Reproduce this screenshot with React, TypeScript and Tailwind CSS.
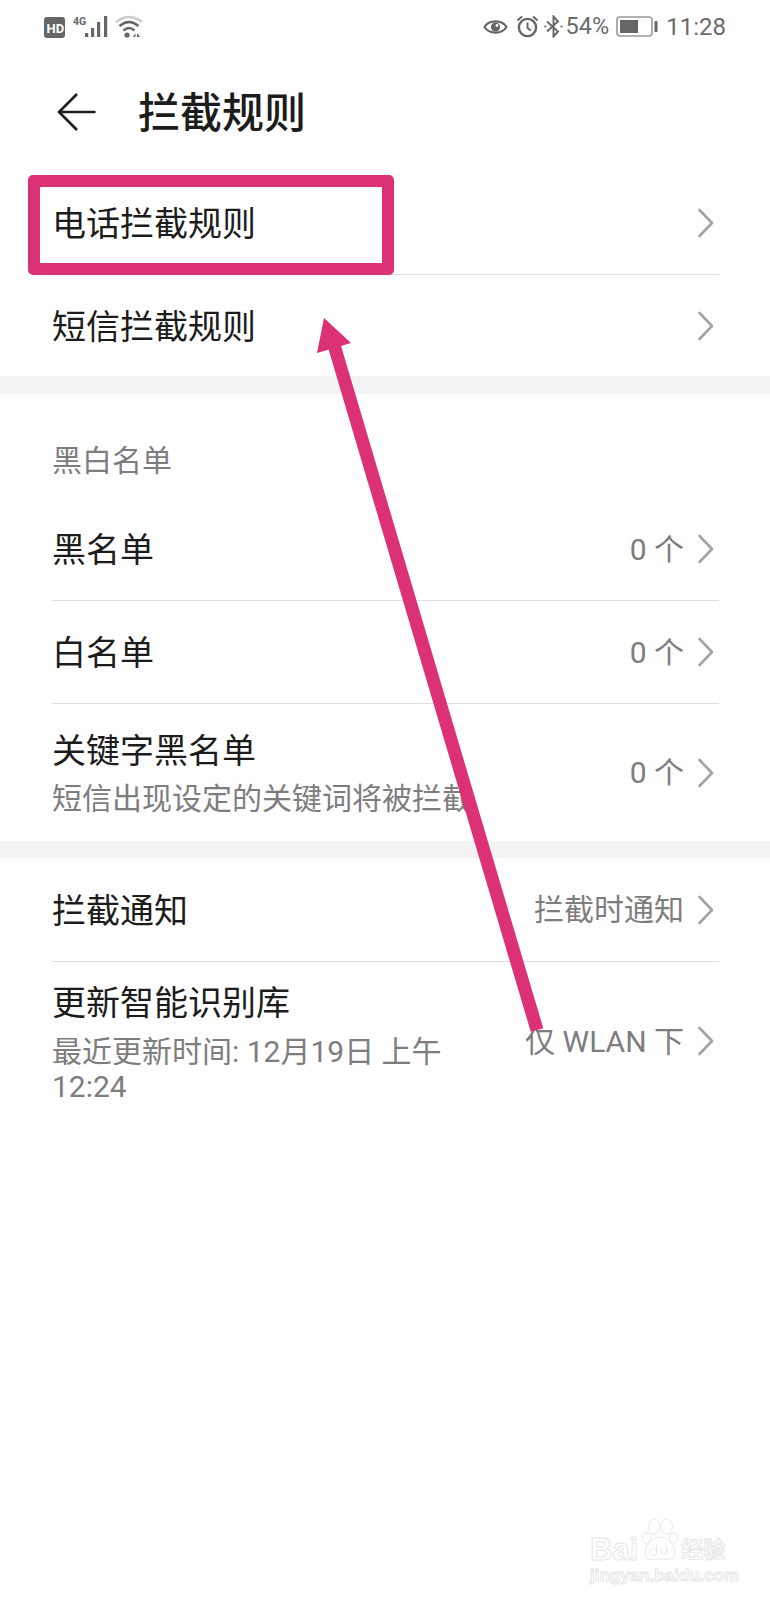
import * as React from "react";

const cjk = "font-['Roboto','Noto_Sans_CJK_SC',sans-serif]";

function Chevron() {
  return (
    <svg width="18" height="30" viewBox="0 0 18 30" fill="none" className="shrink-0">
      <path d="M2.5 2 L15 15 L2.5 28" stroke="#a3a3a3" strokeWidth="2.6" strokeLinecap="round" strokeLinejoin="round" />
    </svg>
  );
}

function Row({
  title,
  sub,
  value,
  height,
  divider,
}: {
  title: string;
  sub?: React.ReactNode;
  value?: string;
  height: string;
  divider?: boolean;
}) {
  return (
    <div className={`ml-[52px] mr-[51px] flex items-center justify-between ${height} ${divider ? "border-b border-[#dedede]" : ""}`}>
      <div className="min-w-0 pt-[2px]">
        <div className="text-[34px] leading-[44px] text-[#1c1c1c]">{title}</div>
        {sub}
      </div>
      <div className="flex shrink-0 items-center">
        {value && <span className="mr-[13px] whitespace-pre pt-[1px] text-[30px] leading-[40px] text-[#7d7d7d]">{value}</span>}
        <span className="mr-[4px]">
          <Chevron />
        </span>
      </div>
    </div>
  );
}

function StatusBar() {
  return (
    <div className="flex h-[52px] items-center justify-between pl-[44px] pr-[44px] pt-[1px] text-[#6b6b6b]">
      <svg width="99" height="28" viewBox="0 0 99 28">
        <rect x="0" y="4" width="21" height="21" rx="3" fill="#666" />
        <text x="2.5" y="19.5" fontSize="13" fontWeight="700" fill="#fff" fontFamily="Roboto">HD</text>
        <text x="29" y="12" fontSize="10.5" fontWeight="700" fill="#666" fontFamily="Roboto">4G</text>
        <rect x="41" y="20" width="3.2" height="4" fill="#666" />
        <rect x="47" y="15" width="3.2" height="9" fill="#666" />
        <rect x="53" y="9" width="3.2" height="15" fill="#666" />
        <rect x="60" y="3" width="3.2" height="21" fill="#666" />
        <path d="M72 9 Q85 -1 98 9" stroke="#ccc" strokeWidth="2.5" fill="none" />
        <path d="M75.5 13 Q85 5 94.5 13" stroke="#666" strokeWidth="2.5" fill="none" />
        <path d="M79.5 17.5 Q85 12.5 90.5 17.5" stroke="#666" strokeWidth="2.5" fill="none" />
        <circle cx="83" cy="22" r="2.6" fill="#666" />
        <path d="M89 24 L91.5 20 V24 Z M93 20 L96 24 H93 Z" fill="#666" />
      </svg>
      <div className="flex items-center font-['Roboto',sans-serif]">
        <svg width="25" height="18" viewBox="0 0 25 18" fill="none" className="mr-[8px]">
          <path d="M1.5 9 C6 1.5 19 1.5 23.5 9 C19 16.5 6 16.5 1.5 9 Z" stroke="#666" strokeWidth="2.2" />
          <circle cx="12.5" cy="9" r="4.6" fill="#666" />
          <circle cx="14" cy="7.5" r="1.4" fill="#fff" />
        </svg>
        <svg width="23" height="23" viewBox="0 0 23 23" fill="none" className="mr-[5px]">
          <circle cx="11.5" cy="12.5" r="8.6" stroke="#666" strokeWidth="2.4" />
          <path d="M11.5 7.5 V13 L15 15.5" stroke="#666" strokeWidth="2" />
          <path d="M1.5 5.5 L6 1.5 M21.5 5.5 L17 1.5" stroke="#666" strokeWidth="2" />
        </svg>
        <svg width="19" height="23" viewBox="0 0 19 23" fill="none">
          <path d="M3 6.5 L14 16.5 L9.5 21.5 V1.5 L14 6.5 L3 16.5" stroke="#666" strokeWidth="1.9" />
          <circle cx="1.3" cy="11.5" r="1.1" fill="#666" />
          <circle cx="17.5" cy="11.5" r="1.1" fill="#666" />
        </svg>
        <span className="ml-[3px] text-[23.5px] leading-none">54%</span>
        <svg width="42" height="21" viewBox="0 0 42 21" fill="none" className="ml-[7px]">
          <rect x="1" y="1" width="35" height="19" rx="3" stroke="#999" strokeWidth="1.6" />
          <rect x="4" y="4" width="18" height="13" fill="#666" />
          <rect x="38.5" y="5" width="3" height="11" rx="1" fill="#666" />
        </svg>
        <span className="ml-[8px] text-[24px] leading-none">11:28</span>
      </div>
    </div>
  );
}

function Watermark() {
  const outlined = "text-white [-webkit-text-stroke:1px_#e6e6e6]";
  return (
    <div className="pointer-events-none absolute left-[590px] top-[1517px] w-[140px] select-none">
      <div className="flex h-[46px] items-end">
        <span className={`font-['Liberation_Sans',sans-serif] text-[31px] font-bold leading-[26px] ${outlined}`}>Bai</span>
        <svg width="42" height="46" viewBox="0 0 38 48" fill="none" stroke="#e6e6e6" strokeWidth="1" className="shrink-0">
          <ellipse cx="6" cy="22" rx="4.5" ry="6" />
          <ellipse cx="14" cy="10" rx="6" ry="8" />
          <ellipse cx="27" cy="10" rx="6" ry="8" />
          <ellipse cx="34" cy="22" rx="4" ry="6" />
          <path d="M20 21 C30 21 37 32 35 40 C33 46 26 44 20 44 C13 44 7 46 5 40 C3 32 10 21 20 21 Z" />
          <path d="M13 33 a3.5 3.5 0 1 0 .01 0 M16.6 28 V39 M21 31 V36 Q21 39 24 39 Q27 39 27 36 V31 M27 31 V39" />
        </svg>
        <span className={`${cjk} ml-[1px] text-[22px] font-bold leading-[26px] ${outlined}`}>经验</span>
      </div>
      <div className={`mt-[4px] font-['Liberation_Sans',sans-serif] text-[17px] font-bold leading-[18px] ${outlined}`}>jingyan.baidu.com</div>
    </div>
  );
}

export default function App() {
  return (
    <div className={`${cjk} relative h-[1600px] w-[770px] overflow-hidden bg-white`}>
      <StatusBar />

      {/* header */}
      <div className="flex h-[119px] items-start pl-[57px] pt-[33px]">
        <svg width="40" height="40" viewBox="0 0 40 40" fill="none" className="mt-[7px]">
          <path d="M38.5 20 H2 M20 2 L2 20 L20 38" stroke="#1c1c1c" strokeWidth="2.6" />
        </svg>
        <h1 className="ml-[41px] text-[42px] font-medium leading-[58px] text-[#1c1c1c]">拦截规则</h1>
      </div>

      <Row title="电话拦截规则" height="h-[104px]" divider />
      <Row title="短信拦截规则" height="h-[101px]" />
      <div className="h-[18px] bg-[#f3f3f3]" />

      <div className="ml-[52px] flex h-[104px] items-start pt-[47px] text-[30px] leading-[40px] text-[#7d7d7d]">黑白名单</div>
      <Row title="黑名单" value="0 个" height="h-[103px]" divider />
      <Row title="白名单" value="0 个" height="h-[103px]" divider />
      <Row
        title="关键字黑名单"
        value="0 个"
        height="h-[137px]"
        sub={<div className="mt-[6px] text-[30px] leading-[40px] text-[#7d7d7d]">短信出现设定的关键词将被拦截</div>}
      />
      <div className="h-[17px] bg-[#f3f3f3]" />

      <Row title="拦截通知" value="拦截时通知" height="h-[104px]" divider />
      <Row
        title="更新智能识别库"
        value="仅 WLAN 下"
        height="h-[158px]"
        sub={<div className="mt-[9px] w-[400px] text-[30px] leading-[35px] text-[#7d7d7d]">最近更新时间: 12月19日 上午 12:24</div>}
      />

      {/* annotations */}
      <div className="absolute left-[28px] top-[175px] h-[100px] w-[366px] rounded-[5px] border-[12px] border-[#dc3174]" />
      <svg width="770" height="1100" viewBox="0 0 770 1100" className="pointer-events-none absolute left-0 top-0" fill="none">
        <path d="M324 318 L351 343 L317 353 Z" fill="#dc3174" />
        <path d="M334 345 L537 1030" stroke="#dc3174" strokeWidth="13" />
      </svg>

      <Watermark />
    </div>
  );
}
